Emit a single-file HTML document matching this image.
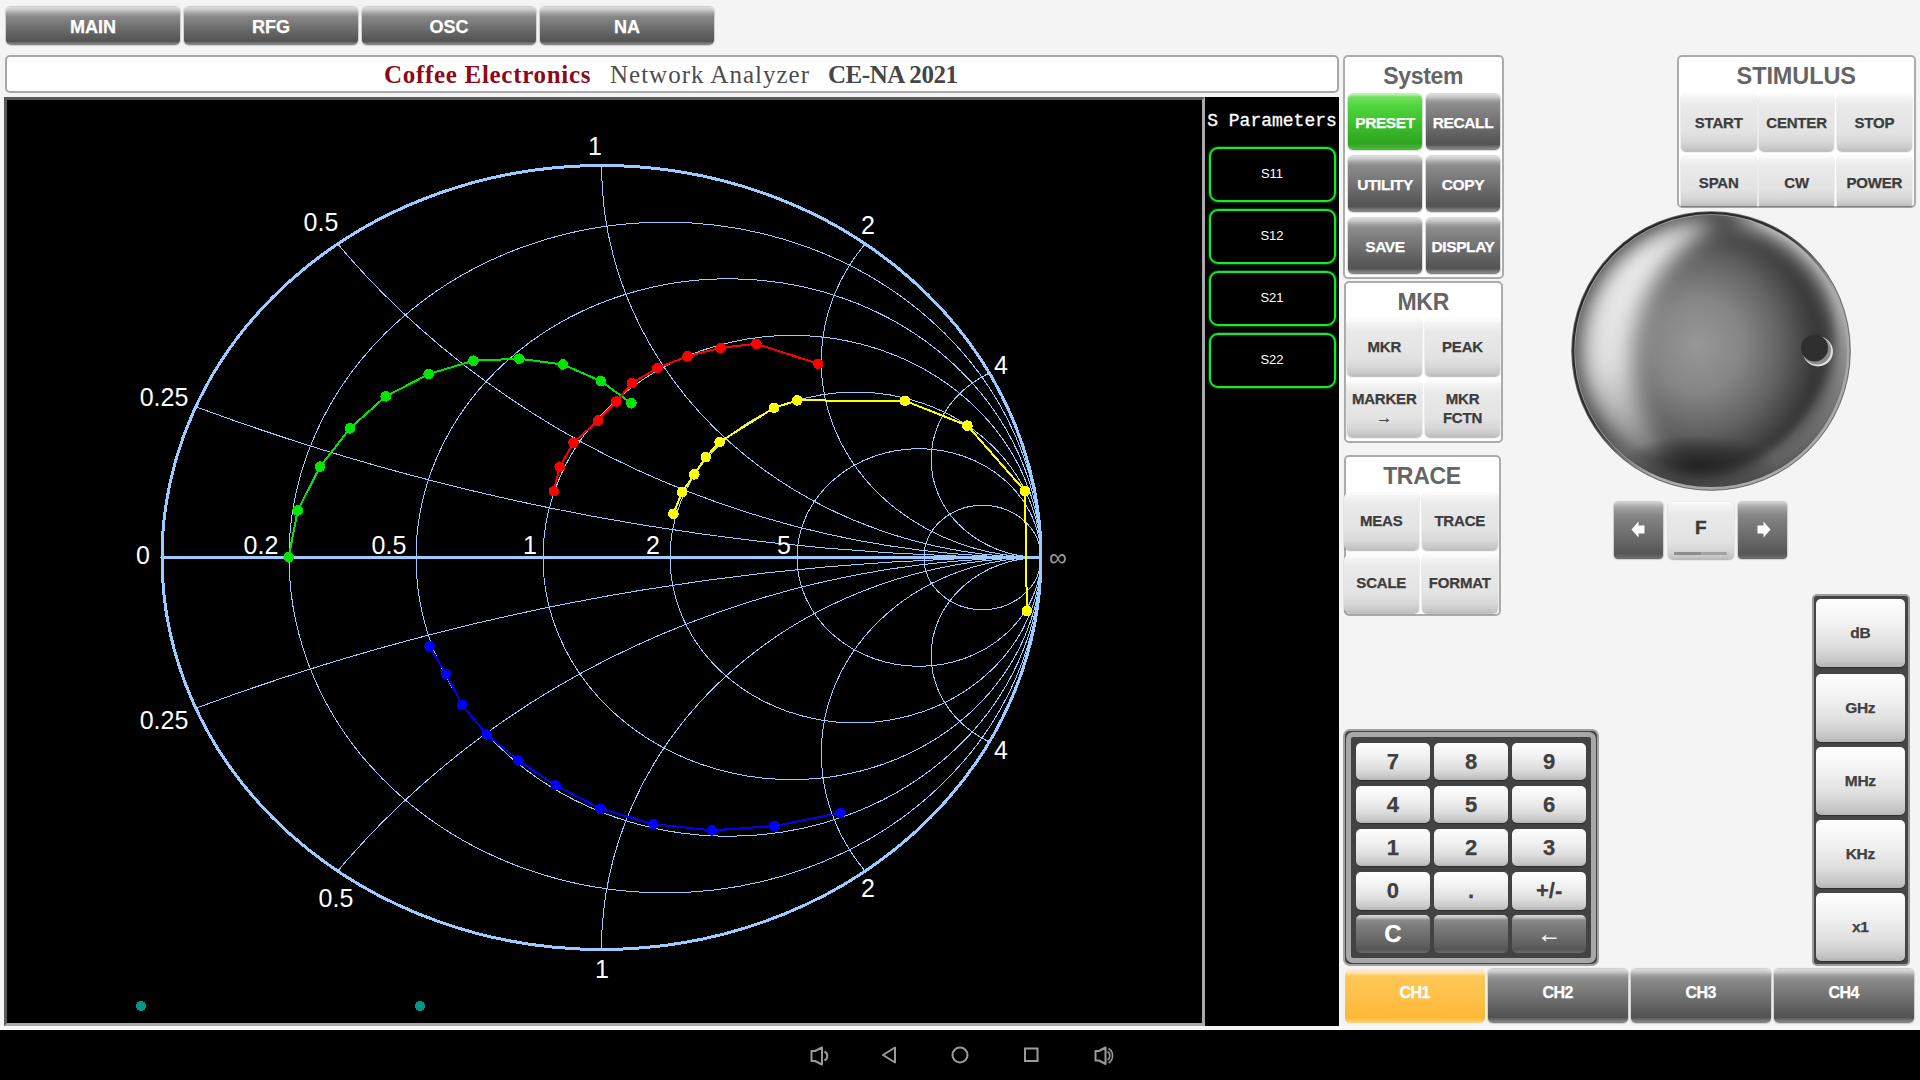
<!DOCTYPE html><html><head><meta charset="utf-8"><style>
*{margin:0;padding:0;box-sizing:border-box}
html,body{width:1920px;height:1080px;overflow:hidden;background:#f4f4f4;font-family:"Liberation Sans",sans-serif}
div,svg{position:absolute}
.b svg{position:static}
.b{display:flex;align-items:center;justify-content:center;text-align:center;font-weight:bold;border-radius:5px;line-height:1.15;-webkit-text-stroke:0.25px currentColor}
.dk{color:#fff;background:linear-gradient(#dcdcdc 0,#c8c8c8 3px,#a4a4a4 6px,#909090 9px,#8a8a8a 20%,#6e6e6e 55%,#575757 84%,#535353 90%,#7c7c7c 96%,#888 100%);box-shadow:0 0 1px 1px rgba(0,0,0,.16)}
.tab{font-size:18px}
.dk span{font-size:15.5px;letter-spacing:-0.4px;position:relative;top:1px}
.tab span{font-size:18px;letter-spacing:0;top:1px}
.gr{color:#fff;background:linear-gradient(#c8f5c0 0,#6ee05c 3px,#4fd63e 12px,#3fc22e 50%,#2ea51f 88%,#57b94a 100%);box-shadow:0 0 1px 1px rgba(0,80,0,.2)}
.gr span{font-size:15.5px;letter-spacing:-0.4px;position:relative;top:1px}
.lt{color:#3c3c3c;background:linear-gradient(#fdfdfd 0,#f3f3f3 7%,#e9e9e9 22%,#e3e3e3 65%,#d8d8d8 84%,#c8c8c8 95%,#bcbcbc 100%);box-shadow:0 1px 1.5px rgba(0,0,0,.28),0 0 1px rgba(0,0,0,.2)}
.lt span{font-size:15px;letter-spacing:-0.2px;position:relative;top:-1px}
.lt.two span{line-height:19px}
.lt small{font-size:16px}
.cut{border-bottom-left-radius:0;border-bottom-right-radius:0}
.lt.st span{top:0.5px}
.lt.cut span{top:2px}
.title{background:#fff;border:2px solid #a8a8a8;border-radius:5px}
.tt{top:58px;line-height:34px;font-family:"Liberation Serif",serif;font-size:25px;white-space:nowrap}
.c1{color:#8b0a1a;font-weight:bold;letter-spacing:0.7px}
.c2{color:#4d4d4d;letter-spacing:1px}
.c3{color:#454545;font-weight:bold;letter-spacing:-0.45px}
.frame{background:#000;border-style:solid;border-width:3px;border-color:#595959 #a9a9a9 #a9a9a9 #595959}
.sp{background:#000}
.chart{left:0;top:0}
.sptitle{color:#fff;font-family:"Liberation Mono",monospace;font-size:18px;text-align:center;white-space:nowrap;-webkit-text-stroke:0.3px #fff}
.sbtn{border:2.5px solid #12ec2a;border-radius:9px;box-shadow:0 0 2px #12ec2a;display:flex;align-items:center;justify-content:center;color:#fff;font-size:13px}
.sbtn span{position:relative;top:-1px}
.panel{background:#fff;border:2px solid #acacac;border-radius:5px}
.ptitle{position:absolute;left:0;right:0;top:6px;text-align:center;font-weight:bold;font-size:23px;letter-spacing:-0.3px;color:#656565}
.knob{left:1570px;top:210px}
.arr{border-radius:4px;background:linear-gradient(#cfcfcf 0,#a6a6a6 5px,#8a8a8a 12px,#7c7c7c 35%,#666 70%,#565656 90%,#707070 100%)}
.fbtn span{font-size:19px;color:#3a3a3a;top:-3px;-webkit-text-stroke:0.4px #3a3a3a}
.fbar{left:1674px;top:551.5px;width:53px;height:3px;background:linear-gradient(90deg,#8c8c8c 50%,#a3a3a3 50%);border-radius:1px}
.upanel{background:#464646;border:2px solid #9c9c9c;border-radius:5px}
.key{color:#404040;background:linear-gradient(#fefefe 0,#f2f2f2 35%,#dedede 70%,#c6c6c6 92%,#b5b5b5 100%);border-radius:5px;box-shadow:0 1px 1px rgba(0,0,0,.35)}
.key span{font-size:22px}
.ukey span{font-size:15.5px;letter-spacing:-0.3px}
.kdk{color:#fff;background:linear-gradient(#dcdcdc 0,#c0c0c0 2.5px,#8c8c8c 5px,#7c7c7c 30%,#626262 75%,#555 90%,#6c6c6c 100%);border-radius:5px}
.kdk span{font-size:24px}
.kpad{background:#444;border:2px solid #a2a2a2;border-radius:7px}
.kin{left:1px;top:1px;right:1px;bottom:1px;border:5px solid #a8a8a8;border-radius:7px;background:#434343}
.ch1{color:#fff;background:linear-gradient(#ffeccb 0,#ffe4ae 4px,#ffc758 7px,#ffc24c 45%,#ffb935 90%,#ffd07c 100%);border-radius:5px}
.ch1 span,.ch span{font-size:16px;letter-spacing:-0.5px;position:relative;top:-3px}
.band{left:0;top:1026px;width:1920px;height:4px;background:#f7f7f7}
.nav{left:0;top:1030px;width:1920px;height:50px;background:#000}
.navsvg{left:0;top:1030px}
</style></head><body><div class="b dk tab" style="left:6.0px;top:7.0px;width:174.0px;height:38.0px;"><span>MAIN</span></div>
<div class="b dk tab" style="left:184.0px;top:7.0px;width:174.0px;height:38.0px;"><span>RFG</span></div>
<div class="b dk tab" style="left:362.0px;top:7.0px;width:174.0px;height:38.0px;"><span>OSC</span></div>
<div class="b dk tab" style="left:540.0px;top:7.0px;width:174.0px;height:38.0px;"><span>NA</span></div>
<div class="title" style="left:4.5px;top:55.0px;width:1334.5px;height:38.0px;"></div>
<div class="tt c1" style="left:384px">Coffee Electronics</div><div class="tt c2" style="left:610px">Network Analyzer</div><div class="tt c3" style="left:828px">CE-NA 2021</div>
<div class="frame" style="left:4.0px;top:97.0px;width:1201.0px;height:929.0px;"></div>
<div class="sp" style="left:1205.0px;top:97.0px;width:134.0px;height:929.0px;"></div>
<svg class="chart" width="1205" height="1026" viewBox="0 0 1205 1026" shape-rendering="crispEdges"><defs><clipPath id="uc"><ellipse cx="601.50" cy="557.50" rx="440.00" ry="392.50"/></clipPath></defs><g clip-path="url(#uc)" fill="none" stroke="#9ccbff" stroke-width="1"><ellipse cx="1041.00" cy="-1402.50" rx="2197.50" ry="1960.00"/><ellipse cx="1041.00" cy="2517.50" rx="2197.50" ry="1960.00"/><ellipse cx="1041.00" cy="-226.50" rx="879.00" ry="784.00"/><ellipse cx="1041.00" cy="1341.50" rx="879.00" ry="784.00"/><ellipse cx="1041.00" cy="165.50" rx="439.50" ry="392.00"/><ellipse cx="1041.00" cy="949.50" rx="439.50" ry="392.00"/><ellipse cx="1041.00" cy="361.50" rx="219.75" ry="196.00"/><ellipse cx="1041.00" cy="753.50" rx="219.75" ry="196.00"/><ellipse cx="1041.00" cy="459.50" rx="109.88" ry="98.00"/><ellipse cx="1041.00" cy="655.50" rx="109.88" ry="98.00"/><ellipse cx="665.00" cy="557.50" rx="376.00" ry="335.36"/><ellipse cx="728.50" cy="557.50" rx="312.50" ry="278.73"/><ellipse cx="792.00" cy="557.50" rx="249.00" ry="222.09"/><ellipse cx="855.50" cy="557.50" rx="185.50" ry="165.45"/><ellipse cx="919.00" cy="557.50" rx="122.00" ry="108.81"/><ellipse cx="982.50" cy="557.50" rx="58.50" ry="52.18"/></g><ellipse cx="601.50" cy="557.50" rx="439.50" ry="392.00" fill="none" stroke="#9ccbff" stroke-width="3"/><line x1="162.00" y1="557.50" x2="1041.00" y2="557.50" stroke="#9ccbff" stroke-width="3"/><polyline fill="none" stroke="#00e600" stroke-width="2" points="288.7,557.3 297.7,510.4 320.1,466.7 349.9,428.4 385.7,396.4 428.7,374.1 473.4,360.7 519.2,358.7 562.9,364.5 600.8,381.1 631.4,403.3"/><g fill="#00e600"><circle cx="288.7" cy="557.3" r="5.3"/><circle cx="297.7" cy="510.4" r="5.3"/><circle cx="320.1" cy="466.7" r="5.3"/><circle cx="349.9" cy="428.4" r="5.3"/><circle cx="385.7" cy="396.4" r="5.3"/><circle cx="428.7" cy="374.1" r="5.3"/><circle cx="473.4" cy="360.7" r="5.3"/><circle cx="519.2" cy="358.7" r="5.3"/><circle cx="562.9" cy="364.5" r="5.3"/><circle cx="600.8" cy="381.1" r="5.3"/><circle cx="631.4" cy="403.3" r="5.3"/></g><polyline fill="none" stroke="#ff0000" stroke-width="2" points="553.9,491.2 559.7,466.7 573.5,442.7 598.0,420.5 616.3,401.5 631.9,383.1 657.5,368.1 687.5,356.3 720.6,347.8 756.3,343.8 818.1,363.8"/><g fill="#ff0000"><circle cx="553.9" cy="491.2" r="5.3"/><circle cx="559.7" cy="466.7" r="5.3"/><circle cx="573.5" cy="442.7" r="5.3"/><circle cx="598.0" cy="420.5" r="5.3"/><circle cx="616.3" cy="401.5" r="5.3"/><circle cx="631.9" cy="383.1" r="5.3"/><circle cx="657.5" cy="368.1" r="5.3"/><circle cx="687.5" cy="356.3" r="5.3"/><circle cx="720.6" cy="347.8" r="5.3"/><circle cx="756.3" cy="343.8" r="5.3"/><circle cx="818.1" cy="363.8" r="5.3"/></g><polyline fill="none" stroke="#ffff00" stroke-width="2" points="673.4,513.8 682.0,492.3 694.3,474.4 705.8,457.1 719.7,442.0 774.1,407.8 797.3,400.4 904.9,400.8 967.4,425.6 1025.0,491.1 1026.9,611.0"/><g fill="#ffff00"><circle cx="673.4" cy="513.8" r="5.3"/><circle cx="682.0" cy="492.3" r="5.3"/><circle cx="694.3" cy="474.4" r="5.3"/><circle cx="705.8" cy="457.1" r="5.3"/><circle cx="719.7" cy="442.0" r="5.3"/><circle cx="774.1" cy="407.8" r="5.3"/><circle cx="797.3" cy="400.4" r="5.3"/><circle cx="904.9" cy="400.8" r="5.3"/><circle cx="967.4" cy="425.6" r="5.3"/><circle cx="1025.0" cy="491.1" r="5.3"/><circle cx="1026.9" cy="611.0" r="5.3"/></g><polyline fill="none" stroke="#0000ff" stroke-width="2" points="429.6,646.4 445.9,673.9 462.2,705.0 486.7,734.5 518.3,760.6 555.7,785.3 600.5,808.8 653.2,824.1 711.9,830.4 774.2,826.0 840.5,812.9"/><g fill="#0000ff"><circle cx="429.6" cy="646.4" r="5.3"/><circle cx="445.9" cy="673.9" r="5.3"/><circle cx="462.2" cy="705.0" r="5.3"/><circle cx="486.7" cy="734.5" r="5.3"/><circle cx="518.3" cy="760.6" r="5.3"/><circle cx="555.7" cy="785.3" r="5.3"/><circle cx="600.5" cy="808.8" r="5.3"/><circle cx="653.2" cy="824.1" r="5.3"/><circle cx="711.9" cy="830.4" r="5.3"/><circle cx="774.2" cy="826.0" r="5.3"/><circle cx="840.5" cy="812.9" r="5.3"/></g><g fill="#fff" font-family="Liberation Sans, sans-serif" font-size="25" text-anchor="middle"><text x="143" y="564">0</text><text x="261" y="554">0.2</text><text x="389" y="554">0.5</text><text x="530" y="554">1</text><text x="653" y="554">2</text><text x="784" y="554">5</text><text x="595" y="155">1</text><text x="321" y="231">0.5</text><text x="868" y="234">2</text><text x="164" y="406">0.25</text><text x="1001" y="374">4</text><text x="164" y="729">0.25</text><text x="1001" y="759">4</text><text x="336" y="907">0.5</text><text x="868" y="897">2</text><text x="602" y="978">1</text></g><text x="1058" y="566" fill="#9a9a9a" font-family="Liberation Sans, sans-serif" font-size="25" text-anchor="middle">&#8734;</text><circle cx="141" cy="1006" r="5" fill="#009688"/><circle cx="420" cy="1006" r="5" fill="#009688"/></svg>
<div class="sptitle" style="left:1205px;top:111px;width:134px;">S Parameters</div>
<div class="sbtn" style="left:1208.5px;top:146.5px;width:127.0px;height:55.0px;"><span>S11</span></div>
<div class="sbtn" style="left:1208.5px;top:208.5px;width:127.0px;height:55.0px;"><span>S12</span></div>
<div class="sbtn" style="left:1208.5px;top:270.5px;width:127.0px;height:55.0px;"><span>S21</span></div>
<div class="sbtn" style="left:1208.5px;top:332.5px;width:127.0px;height:55.0px;"><span>S22</span></div>
<div class="panel" style="left:1342.5px;top:55.0px;width:161.5px;height:224.0px;"><div class="ptitle">System</div></div>
<div class="b gr" style="left:1348.0px;top:94.0px;width:74.0px;height:56.0px;"><span>PRESET</span></div>
<div class="b dk" style="left:1426.0px;top:94.0px;width:74.0px;height:56.0px;"><span>RECALL</span></div>
<div class="b dk" style="left:1348.0px;top:156.0px;width:74.0px;height:56.0px;"><span>UTILITY</span></div>
<div class="b dk" style="left:1426.0px;top:156.0px;width:74.0px;height:56.0px;"><span>COPY</span></div>
<div class="b dk" style="left:1348.0px;top:218.0px;width:74.0px;height:56.0px;"><span>SAVE</span></div>
<div class="b dk" style="left:1426.0px;top:218.0px;width:74.0px;height:56.0px;"><span>DISPLAY</span></div>
<div class="panel" style="left:1343.5px;top:281.0px;width:159.5px;height:161.5px;"><div class="ptitle">MKR</div></div>
<div class="b lt" style="left:1347.0px;top:319.0px;width:74.5px;height:57.0px;"><span>MKR</span></div>
<div class="b lt" style="left:1425.0px;top:319.0px;width:75.0px;height:57.0px;"><span>PEAK</span></div>
<div class="b lt two" style="left:1347.0px;top:381.0px;width:74.5px;height:56.0px;"><span>MARKER<br><small>&#8594;</small></span></div>
<div class="b lt two" style="left:1425.0px;top:381.0px;width:75.0px;height:56.0px;"><span>MKR<br>FCTN</span></div>
<div class="panel" style="left:1343.5px;top:455.0px;width:157.0px;height:161.0px;"><div class="ptitle">TRACE</div></div>
<div class="b lt" style="left:1344.0px;top:493.0px;width:74.5px;height:57.0px;"><span>MEAS</span></div>
<div class="b lt" style="left:1422.0px;top:493.0px;width:75.5px;height:57.0px;"><span>TRACE</span></div>
<div class="b lt" style="left:1344.0px;top:555.0px;width:74.5px;height:57.5px;"><span>SCALE</span></div>
<div class="b lt" style="left:1422.0px;top:555.0px;width:75.5px;height:57.5px;"><span>FORMAT</span></div>
<div class="panel" style="left:1676.5px;top:55.0px;width:239.5px;height:153.0px;"><div class="ptitle" style="font-size:23.5px;letter-spacing:-0.1px">STIMULUS</div></div>
<div class="b lt st" style="left:1681.0px;top:93.5px;width:75.5px;height:57.0px;"><span>START</span></div>
<div class="b lt st" style="left:1758.8px;top:93.5px;width:75.5px;height:57.0px;"><span>CENTER</span></div>
<div class="b lt st" style="left:1836.6px;top:93.5px;width:75.5px;height:57.0px;"><span>STOP</span></div>
<div class="b lt st cut" style="left:1681.0px;top:155.5px;width:75.5px;height:50.5px;"><span>SPAN</span></div>
<div class="b lt st cut" style="left:1758.8px;top:155.5px;width:75.5px;height:50.5px;"><span>CW</span></div>
<div class="b lt st cut" style="left:1836.6px;top:155.5px;width:75.5px;height:50.5px;"><span>POWER</span></div>
<svg class="knob" width="282" height="282" viewBox="0 0 282 282">
<defs>
<radialGradient id="kg" cx="0.5" cy="0.5" r="0.5">
<stop offset="0" stop-color="#979797"/><stop offset="0.35" stop-color="#858585"/><stop offset="0.65" stop-color="#626262"/><stop offset="0.88" stop-color="#3e3e3e"/><stop offset="1" stop-color="#363636" stop-opacity="0"/>
</radialGradient>
<linearGradient id="hg" x1="0" y1="0" x2="0.3" y2="1">
<stop offset="0" stop-color="#fff" stop-opacity="0.95"/><stop offset="0.5" stop-color="#fff" stop-opacity="0.8"/><stop offset="0.85" stop-color="#fff" stop-opacity="0.25"/><stop offset="1" stop-color="#fff" stop-opacity="0"/>
</linearGradient>
<radialGradient id="sg"><stop offset="0" stop-color="#1a1a1a" stop-opacity="0.75"/><stop offset="0.5" stop-color="#1a1a1a" stop-opacity="0.45"/><stop offset="1" stop-color="#1a1a1a" stop-opacity="0"/></radialGradient>
<linearGradient id="rg" x1="0" y1="0" x2="1" y2="1"><stop offset="0" stop-color="#222" stop-opacity="1"/><stop offset="0.42" stop-color="#222" stop-opacity="0.9"/><stop offset="0.62" stop-color="#222" stop-opacity="0"/></linearGradient>
<clipPath id="kc"><circle cx="141" cy="141" r="137"/></clipPath>
<filter id="bl" x="-50%" y="-50%" width="200%" height="200%"><feGaussianBlur stdDeviation="11"/></filter>
<filter id="bl5" x="-50%" y="-50%" width="200%" height="200%"><feGaussianBlur stdDeviation="5"/></filter>
<filter id="bl2" x="-50%" y="-50%" width="200%" height="200%"><feGaussianBlur stdDeviation="12"/></filter>
</defs>
<circle cx="141" cy="141" r="139" fill="#353535"/>
<g clip-path="url(#kc)">
<path fill-rule="evenodd" fill="#5c5c5c" filter="url(#bl5)" d="M141 141 m-137 0 a137 137 0 1 0 274 0 a137 137 0 1 0 -274 0 Z M126 118 m-140 0 a140 140 0 1 0 280 0 a140 140 0 1 0 -280 0 Z"/>
<ellipse cx="128" cy="135" rx="128" ry="135" fill="url(#kg)"/>
<path fill-rule="evenodd" fill="url(#hg)" filter="url(#bl)" d="M141 141 m-131 0 a131 131 0 1 0 262 0 a131 131 0 1 0 -262 0 Z M216 150 m-153 0 a153 153 0 1 0 306 0 a153 153 0 1 0 -306 0 Z"/>
<ellipse cx="128" cy="255" rx="80" ry="30" fill="url(#sg)"/>
</g>
<circle cx="141" cy="141" r="137.5" fill="none" stroke="#a8a8a8" stroke-width="3"/>
<circle cx="141" cy="141" r="139.3" fill="none" stroke="#6a6a6a" stroke-width="1"/>
<circle cx="141" cy="141" r="137.8" fill="none" stroke="url(#rg)" stroke-width="2.2"/>
<circle cx="248" cy="141.5" r="15" fill="#e0e0e0"/><circle cx="247" cy="140.5" r="14" fill="#8a8a8a"/>
<circle cx="244.5" cy="138" r="13.5" fill="#2f2f2f"/>
</svg>
<div class="b dk arr" style="left:1614.0px;top:502.0px;width:48.5px;height:57.0px;"><span><svg width="14" height="17" viewBox="0 0 14 17" style="margin-left:-1px"><path d="M0.5 8.5 L7.5 0.5 L7.5 4.5 L13.5 4.5 L13.5 12.5 L7.5 12.5 L7.5 16.5 Z" fill="#fff"/></svg></span></div>
<div class="b lt fbtn" style="left:1668.0px;top:502.0px;width:65.5px;height:57.0px;"><span>F</span></div>
<div class="fbar"></div>
<div class="b dk arr" style="left:1738.0px;top:502.0px;width:48.5px;height:57.0px;"><span><svg width="14" height="17" viewBox="0 0 14 17" style="margin-left:4px"><path d="M13.5 8.5 L6.5 0.5 L6.5 4.5 L0.5 4.5 L0.5 12.5 L6.5 12.5 L6.5 16.5 Z" fill="#fff"/></svg></span></div>
<div class="upanel" style="left:1811.5px;top:593.5px;width:98.0px;height:372.0px;"></div>
<div class="b key ukey" style="left:1815.5px;top:598.8px;width:89.5px;height:68.0px;"><span>dB</span></div>
<div class="b key ukey" style="left:1815.5px;top:673.5px;width:89.5px;height:68.0px;"><span>GHz</span></div>
<div class="b key ukey" style="left:1815.5px;top:747.0px;width:89.5px;height:68.0px;"><span>MHz</span></div>
<div class="b key ukey" style="left:1815.5px;top:820.0px;width:89.5px;height:68.0px;"><span>KHz</span></div>
<div class="b key ukey" style="left:1815.5px;top:893.0px;width:89.5px;height:68.0px;"><span>x1</span></div>
<div class="kpad" style="left:1343.0px;top:729.0px;width:255.5px;height:236.5px;"><div class="kin"></div></div>
<div class="b key" style="left:1355.7px;top:742.7px;width:74.5px;height:37.5px;"><span>7</span></div>
<div class="b key" style="left:1433.8px;top:742.7px;width:74.5px;height:37.5px;"><span>8</span></div>
<div class="b key" style="left:1511.9px;top:742.7px;width:74.5px;height:37.5px;"><span>9</span></div>
<div class="b key" style="left:1355.7px;top:785.8px;width:74.5px;height:37.5px;"><span>4</span></div>
<div class="b key" style="left:1433.8px;top:785.8px;width:74.5px;height:37.5px;"><span>5</span></div>
<div class="b key" style="left:1511.9px;top:785.8px;width:74.5px;height:37.5px;"><span>6</span></div>
<div class="b key" style="left:1355.7px;top:828.9px;width:74.5px;height:37.5px;"><span>1</span></div>
<div class="b key" style="left:1433.8px;top:828.9px;width:74.5px;height:37.5px;"><span>2</span></div>
<div class="b key" style="left:1511.9px;top:828.9px;width:74.5px;height:37.5px;"><span>3</span></div>
<div class="b key" style="left:1355.7px;top:872.0px;width:74.5px;height:37.5px;"><span>0</span></div>
<div class="b key" style="left:1433.8px;top:872.0px;width:74.5px;height:37.5px;"><span>.</span></div>
<div class="b key" style="left:1511.9px;top:872.0px;width:74.5px;height:37.5px;"><span>+/-</span></div>
<div class="b kdk" style="left:1355.7px;top:915.1px;width:74.5px;height:37.5px;"><span>C</span></div>
<div class="b kdk" style="left:1433.8px;top:915.1px;width:74.5px;height:37.5px;"><span></span></div>
<div class="b kdk" style="left:1511.9px;top:915.1px;width:74.5px;height:37.5px;"><span>&#8592;</span></div>
<div class="b ch1" style="left:1345.0px;top:968.5px;width:139.5px;height:54.5px;"><span>CH1</span></div>
<div class="b dk ch" style="left:1488.0px;top:968.5px;width:139.5px;height:54.5px;"><span>CH2</span></div>
<div class="b dk ch" style="left:1631.0px;top:968.5px;width:139.5px;height:54.5px;"><span>CH3</span></div>
<div class="b dk ch" style="left:1774.0px;top:968.5px;width:139.5px;height:54.5px;"><span>CH4</span></div>
<div class="band"></div><div class="nav"></div>
<svg class="navsvg" width="1920" height="50" viewBox="0 1030 1920 50" fill="none" stroke="#9a9a9a" stroke-width="2">
<path d="M811.5 1051 L815 1051 L822 1047.5 L822 1064.5 L815 1061 L811.5 1061 Z" stroke-linejoin="round"/>
<path d="M824.5 1051.5 A5 5 0 0 1 824.5 1060.5" />
<path d="M895 1047.5 L895 1062.5 L883 1055 Z" stroke-linejoin="round"/>
<circle cx="960" cy="1055" r="7.5"/>
<rect x="1025" y="1048.5" width="12.5" height="12.5"/>
<path d="M1095.5 1051 L1099 1051 L1105.5 1047.5 L1105.5 1064 L1099 1060.5 L1095.5 1060.5 Z" stroke-linejoin="round"/>
<path d="M1107.5 1051.5 A5 5 0 0 1 1107.5 1060" stroke-width="1.6"/>
<path d="M1108.5 1048.5 A8.5 8.5 0 0 1 1108.5 1063" stroke-width="1.6"/>
</svg></body></html>
